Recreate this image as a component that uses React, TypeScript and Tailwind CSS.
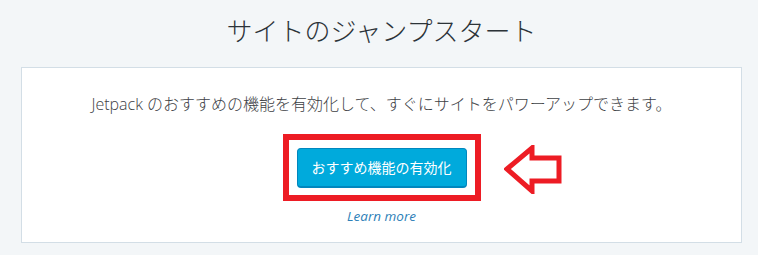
import React from 'react';

const jp = "font-['Open_Sans','Noto_Sans_CJK_JP',sans-serif]";

const Arrow: React.FC = () => (
  <svg
    width="58"
    height="49"
    viewBox="0 0 58 49"
    className="absolute left-[215px] top-[5px]"
  >
    <path
      d="M3 24 L28 3 L28 13 L55 13 L55 36 L28 36 L28 46 Z"
      fill="#ffffff"
      stroke="#ed1c24"
      strokeWidth="5"
      strokeLinejoin="miter"
    />
  </svg>
);

export default function App() {
  return (
    <div className={`h-[255px] w-full bg-[#f3f6f8] pl-[21px] pr-[16px] ${jp}`}>
      <h1 className="flex h-[67px] items-center justify-center pb-[4px] text-[26px] font-light text-[#2c3338]">
        サイトのジャンプスタート
      </h1>
      <div className="flex h-[176px] flex-col items-center border border-[#d3dee6] bg-white pt-[25px]">
        <p className="text-[16px] font-light leading-[22px] text-[#3d4145]">
          Jetpack のおすすめの機能を有効化して、すぐにサイトをパワーアップできます。
        </p>
        <div className="relative mt-[19px] border-[6px] border-[#ed1c24] px-[8px] pb-[7px] pt-[8px]">
          <button className="flex h-[40px] w-[170px] items-center justify-center rounded-[4px] border border-[#0087be] border-b-2 bg-[#00aadc] text-[14px] text-white">
            おすすめ機能の有効化
          </button>
          <Arrow />
        </div>
        <a className="mt-[7px] text-[13.5px] italic leading-[16px] text-[#2e7fb8]">Learn more</a>
      </div>
    </div>
  );
}
